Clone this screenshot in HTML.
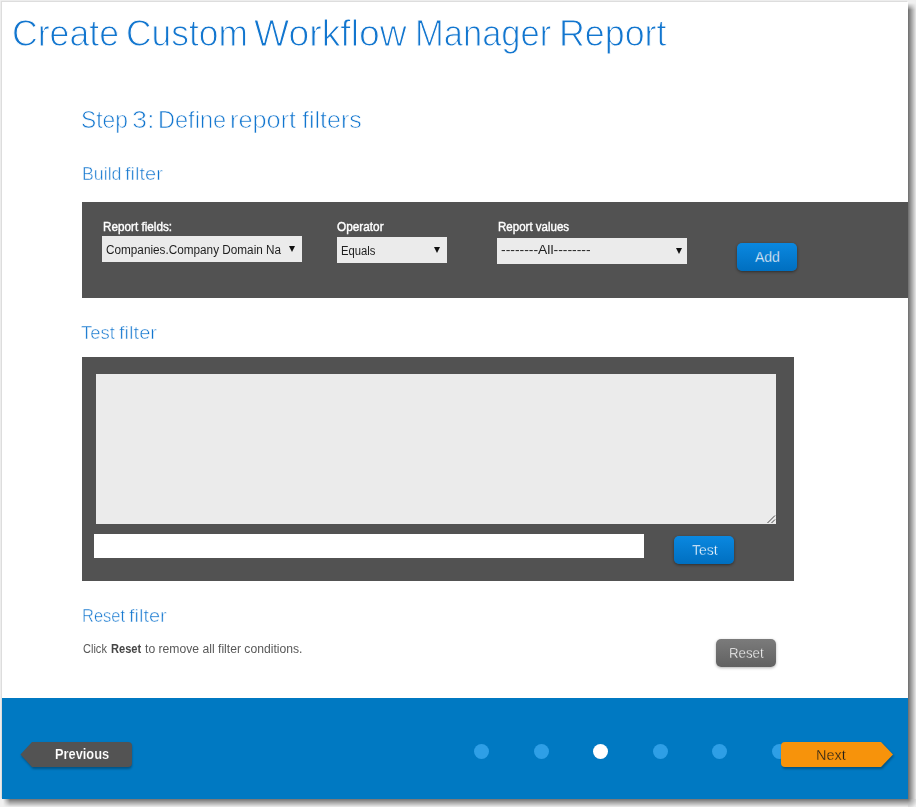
<!DOCTYPE html>
<html>
<head>
<meta charset="utf-8">
<style>
html,body{margin:0;padding:0;}
body{width:916px;height:807px;background:#f0f0f0;position:relative;overflow:hidden;font-family:"Liberation Sans",sans-serif;}
.a{position:absolute;}
.page{left:2px;top:2px;width:906px;height:797px;background:#fff;box-shadow:-1px -1px 1px rgba(0,0,0,0.08);}
.tx{position:absolute;white-space:nowrap;transform-origin:0 0;}
.pnl{background:#525252;}
.sel{background:#ebebeb;}
.arr{width:0;height:0;border-left:3.5px solid transparent;border-right:3.5px solid transparent;border-top:6px solid #111;}
.btn{border-radius:5px;}
.bbl{background:linear-gradient(#0a88e0,#006fc0);box-shadow:0 1px 3px rgba(0,0,0,0.45);}
.bgr{background:linear-gradient(#7b7b7b,#616161);box-shadow:0 1px 3px rgba(0,0,0,0.3);}
.foot{left:2px;top:698px;width:906px;height:101px;background:#0079c2;}
.dot{width:15px;height:15px;border-radius:50%;background:#2e9fe6;top:744px;}
</style>
</head>
<body>
<div class="a page"></div>
<div class="a" style="left:908px;top:2px;width:8px;height:797px;background:linear-gradient(to right,rgba(0,0,0,.55),rgba(0,0,0,.03));-webkit-mask-image:linear-gradient(to bottom,transparent 1px,#000 8px);"></div>
<div class="a" style="left:2px;top:799px;width:906px;height:8px;background:linear-gradient(to bottom,rgba(0,0,0,.52),rgba(0,0,0,.01));-webkit-mask-image:linear-gradient(to right,transparent 1px,#000 8px);"></div>
<div class="a" style="left:908px;top:799px;width:8px;height:8px;background:radial-gradient(circle at 0 0,rgba(0,0,0,.52) 0px,rgba(0,0,0,.25) 4px,rgba(0,0,0,0) 10px);"></div>
<div class="a pnl" style="left:82px;top:202px;width:826px;height:96px;"></div>
<div class="a sel" style="left:102px;top:236px;width:200px;height:26px;"></div>
<div class="a arr" style="left:288.5px;top:246px;"></div>
<div class="a sel" style="left:337px;top:237px;width:110px;height:26px;"></div>
<div class="a arr" style="left:433.5px;top:247px;"></div>
<div class="a sel" style="left:497px;top:238px;width:190px;height:26px;"></div>
<div class="a arr" style="left:676px;top:248px;"></div>
<div class="a btn bbl" style="left:737px;top:243px;width:60px;height:28px;"></div>

<div class="a pnl" style="left:82px;top:357px;width:712px;height:224px;"></div>
<div class="a" style="left:96px;top:374px;width:680px;height:150px;background:#ebebeb;"></div>
<svg class="a" style="left:764px;top:512px;" width="12" height="12" viewBox="0 0 12 12"><path d="M3.5 11 L11 3.5 M7.5 11 L11 7.5" stroke="#4a4a4a" stroke-width="1" fill="none"/></svg>
<div class="a" style="left:94px;top:534px;width:550px;height:24px;background:#fff;"></div>
<div class="a btn bbl" style="left:674px;top:536px;width:60px;height:28px;"></div>

<div class="a btn bgr" style="left:716px;top:639px;width:60px;height:28px;"></div>

<div class="a foot"></div>
<div class="a dot" style="left:473.7px;"></div>
<div class="a dot" style="left:533.5px;"></div>
<div class="a dot" style="left:593.2px;background:#fff;"></div>
<div class="a dot" style="left:652.8px;"></div>
<div class="a dot" style="left:712.2px;"></div>
<div class="a dot" style="left:772px;"></div>
<svg class="a" style="left:0;top:0;overflow:visible;" width="916" height="807">
  <defs><filter id="blr" x="-10%" y="-30%" width="120%" height="160%"><feGaussianBlur stdDeviation="1.2"/></filter></defs>
  <path d="M33 743.5 H128 Q132 743.5 132 747.5 V765 Q132 769 128 769 H33 L21 756 Z" fill="#000" opacity="0.3" filter="url(#blr)"/>
  <path d="M32 742 H128 Q132 742 132 746 V763 Q132 767 128 767 H32 L20.5 754.5 Z" fill="#535353"/>
  <path d="M785 743.5 H882 L894 756 L882 769 H785 Q782 769 782 765 V747.5 Q782 743.5 785 743.5Z" fill="#000" opacity="0.3" filter="url(#blr)"/>
  <path d="M785 742 H881 L893 754.5 L881 767 H785 Q781 767 781 763 V746 Q781 742 785 742Z" fill="#f7930b"/>
</svg>
<div class="tx" style="left:12.02px;top:15.60px;transform:scaleX(0.9904);font-size:36px;line-height:36px;font-weight:400;color:#1276cf;-webkit-text-stroke:1.0px #fff;">Create</div>
<div class="tx" style="left:125.84px;top:15.60px;transform:scaleX(0.9824);font-size:36px;line-height:36px;font-weight:400;color:#1276cf;-webkit-text-stroke:1.0px #fff;">Custom</div>
<div class="tx" style="left:253.56px;top:15.60px;transform:scaleX(1.0356);font-size:36px;line-height:36px;font-weight:400;color:#1276cf;-webkit-text-stroke:1.0px #fff;">Workflow</div>
<div class="tx" style="left:414.76px;top:15.60px;transform:scaleX(0.9591);font-size:36px;line-height:36px;font-weight:400;color:#1276cf;-webkit-text-stroke:1.0px #fff;">Manager</div>
<div class="tx" style="left:558.62px;top:15.60px;transform:scaleX(0.9942);font-size:36px;line-height:36px;font-weight:400;color:#1276cf;-webkit-text-stroke:1.0px #fff;">Report</div>
<div class="tx" style="left:81.10px;top:107.50px;transform:scaleX(0.9500);font-size:24px;line-height:24px;font-weight:400;color:#1276cf;-webkit-text-stroke:0.7px #fff;">Step</div>
<div class="tx" style="left:131.75px;top:107.50px;transform:scaleX(1.1250);font-size:24px;line-height:24px;font-weight:400;color:#1276cf;-webkit-text-stroke:0.7px #fff;">3:</div>
<div class="tx" style="left:158.24px;top:107.50px;transform:scaleX(0.9818);font-size:24px;line-height:24px;font-weight:400;color:#1276cf;-webkit-text-stroke:0.7px #fff;">Define</div>
<div class="tx" style="left:230.19px;top:107.50px;transform:scaleX(1.0550);font-size:24px;line-height:24px;font-weight:400;color:#1276cf;-webkit-text-stroke:0.7px #fff;">report</div>
<div class="tx" style="left:301.66px;top:107.50px;transform:scaleX(1.0418);font-size:24px;line-height:24px;font-weight:400;color:#1276cf;-webkit-text-stroke:0.7px #fff;">filters</div>
<div class="tx" style="left:81.53px;top:165.40px;transform:scaleX(0.9865);font-size:18px;line-height:18px;font-weight:400;color:#1276cf;-webkit-text-stroke:0.5px #fff;">Build</div>
<div class="tx" style="left:124.89px;top:165.40px;transform:scaleX(1.1125);font-size:18px;line-height:18px;font-weight:400;color:#1276cf;-webkit-text-stroke:0.5px #fff;">filter</div>
<div class="tx" style="left:81.37px;top:323.60px;transform:scaleX(1.0281);font-size:18px;line-height:18px;font-weight:400;color:#1276cf;-webkit-text-stroke:0.5px #fff;">Test</div>
<div class="tx" style="left:119.08px;top:323.60px;transform:scaleX(1.1187);font-size:18px;line-height:18px;font-weight:400;color:#1276cf;-webkit-text-stroke:0.5px #fff;">filter</div>
<div class="tx" style="left:82.17px;top:606.50px;transform:scaleX(0.9156);font-size:18px;line-height:18px;font-weight:400;color:#1276cf;-webkit-text-stroke:0.5px #fff;">Reset</div>
<div class="tx" style="left:128.99px;top:606.50px;transform:scaleX(1.1094);font-size:18px;line-height:18px;font-weight:400;color:#1276cf;-webkit-text-stroke:0.5px #fff;">filter</div>
<div class="tx" style="left:83.30px;top:642.70px;transform:scaleX(0.9192);font-size:12px;line-height:12px;font-weight:400;color:#595959;">Click</div>
<div class="tx" style="left:111.18px;top:642.70px;transform:scaleX(0.9219);font-size:12px;line-height:12px;font-weight:700;color:#454545;">Reset</div>
<div class="tx" style="left:144.90px;top:642.70px;transform:scaleX(1.0135);font-size:12px;line-height:12px;font-weight:400;color:#595959;">to remove all filter conditions.</div>
<div class="tx" style="left:102.80px;top:221.18px;transform:scaleX(0.9370);font-size:12.5px;line-height:12.5px;font-weight:400;color:#ffffff;-webkit-text-stroke-width:0.4px;">Report fields:</div>
<div class="tx" style="left:337.40px;top:221.18px;transform:scaleX(0.9440);font-size:12.5px;line-height:12.5px;font-weight:400;color:#ffffff;-webkit-text-stroke-width:0.4px;">Operator</div>
<div class="tx" style="left:497.80px;top:221.18px;transform:scaleX(0.9221);font-size:12.5px;line-height:12.5px;font-weight:400;color:#ffffff;-webkit-text-stroke-width:0.4px;">Report values</div>
<div class="tx" style="left:106.40px;top:244.18px;transform:scaleX(0.9403);font-size:12.5px;line-height:12.5px;font-weight:400;color:#1e1e1e;">Companies.Company Domain Na</div>
<div class="tx" style="left:340.70px;top:245.28px;transform:scaleX(0.9027);font-size:12.5px;line-height:12.5px;font-weight:400;color:#1e1e1e;">Equals</div>
<div class="tx" style="left:500.80px;top:243.57px;transform:scaleX(1.1125);font-size:12.5px;line-height:12.5px;font-weight:400;color:#1e1e1e;">--------All--------</div>
<div class="tx" style="left:755.00px;top:250.10px;transform:scaleX(1.0000);font-size:14px;line-height:14px;font-weight:400;color:#ffffff;-webkit-text-stroke:0.35px #0a7cd0;">Add</div>
<div class="tx" style="left:691.50px;top:543.00px;transform:scaleX(1.0040);font-size:14px;line-height:14px;font-weight:400;color:#ffffff;-webkit-text-stroke:0.35px #0a7cd0;">Test</div>
<div class="tx" style="left:728.95px;top:645.90px;transform:scaleX(0.9457);font-size:14px;line-height:14px;font-weight:400;color:#ffffff;-webkit-text-stroke:0.35px #6e6e6e;">Reset</div>
<div class="tx" style="left:54.98px;top:747.00px;transform:scaleX(0.9155);font-size:14px;line-height:14px;font-weight:700;color:#ffffff;-webkit-text-stroke:0.15px #535353;">Previous</div>
<div class="tx" style="left:815.96px;top:747.90px;transform:scaleX(1.0357);font-size:14px;line-height:14px;font-weight:400;color:#1a1a1a;-webkit-text-stroke:0.3px #f7930b;">Next</div>
</body>
</html>
